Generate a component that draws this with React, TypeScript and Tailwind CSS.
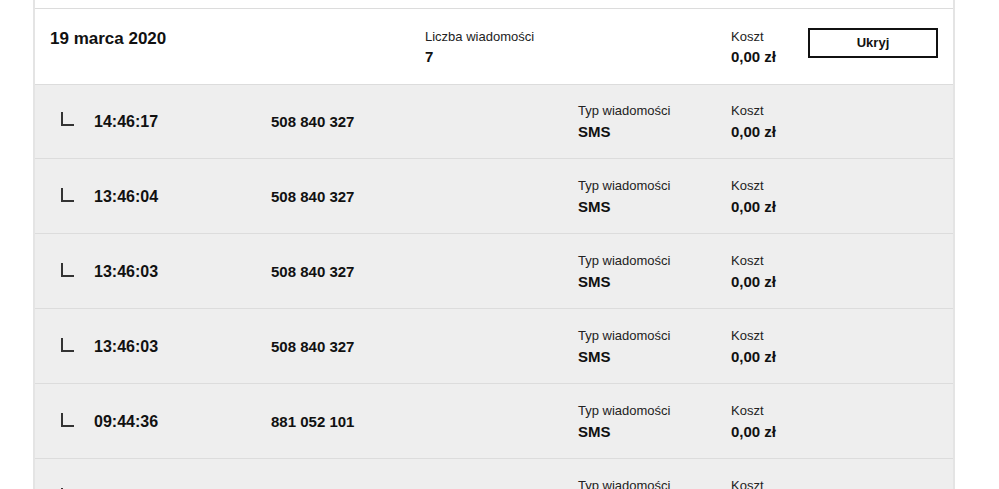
import React from "react";

const rows = [
  { time: "14:46:17", phone: "508 840 327" },
  { time: "13:46:04", phone: "508 840 327" },
  { time: "13:46:03", phone: "508 840 327" },
  { time: "13:46:03", phone: "508 840 327" },
  { time: "09:44:36", phone: "881 052 101" },
  { time: "09:44:36", phone: "881 052 101" },
];

function Row({ time, phone, first }: { time: string; phone: string; first: boolean }) {
  return (
    <div
      className={
        first
          ? "flex h-[74px] items-center border-t border-[#dcdcdc] bg-[#eeeeee] pl-[26px] text-[#111]"
          : "flex h-[75px] items-center border-t border-[#dcdcdc] bg-[#eeeeee] pl-[26px] pt-[2px] text-[#111]"
      }
    >
      <div className="mb-[5px] h-[14px] w-[13px] border-b-2 border-l-2 border-[#333]" />
      <div className="ml-[20px] w-[177px] text-[16px] font-bold leading-[20px]">{time}</div>
      <div className="w-[307px] text-[15px] font-bold leading-[20px]">{phone}</div>
      <div className="w-[153px] pb-[2px]">
        <div className="text-[13px] leading-[21px] text-[#222]">Typ wiadomości</div>
        <div className="text-[15px] font-bold leading-[21px]">SMS</div>
      </div>
      <div className="pb-[2px]">
        <div className="text-[13px] leading-[21px] text-[#222]">Koszt</div>
        <div className="text-[15px] font-bold leading-[21px]">0,00 zł</div>
      </div>
    </div>
  );
}

export default function App() {
  return (
    <div
      className="h-[489px] overflow-hidden bg-white"
      style={{ fontFamily: '"Liberation Sans", Arial, sans-serif' }}
    >
      <div className="ml-[33px] w-[922px] border-x-2 border-[#e4e4e4]">
        <div className="h-[8px]" />
        <div className="flex h-[76px] items-start border-t border-[#dcdcdc] bg-white pl-[15px] pt-[18px] text-[#111]">
          <div className="mt-[2px] w-[375px] text-[17px] font-bold leading-[20px]">19 marca 2020</div>
          <div className="w-[306px]">
            <div className="text-[13px] leading-[20px] text-[#222]">Liczba wiadomości</div>
            <div className="text-[15px] font-bold leading-[20px]">7</div>
          </div>
          <div className="w-[77px]">
            <div className="text-[13px] leading-[20px] text-[#222]">Koszt</div>
            <div className="text-[15px] font-bold leading-[20px]">0,00 zł</div>
          </div>
          <button className="mt-[1px] flex h-[30px] w-[130px] items-center justify-center border-2 border-[#111] bg-white text-[13px] font-bold text-[#111]">
            Ukryj
          </button>
        </div>
        {rows.map((r, i) => (
          <Row key={i} time={r.time} phone={r.phone} first={i === 0} />
        ))}
      </div>
    </div>
  );
}
